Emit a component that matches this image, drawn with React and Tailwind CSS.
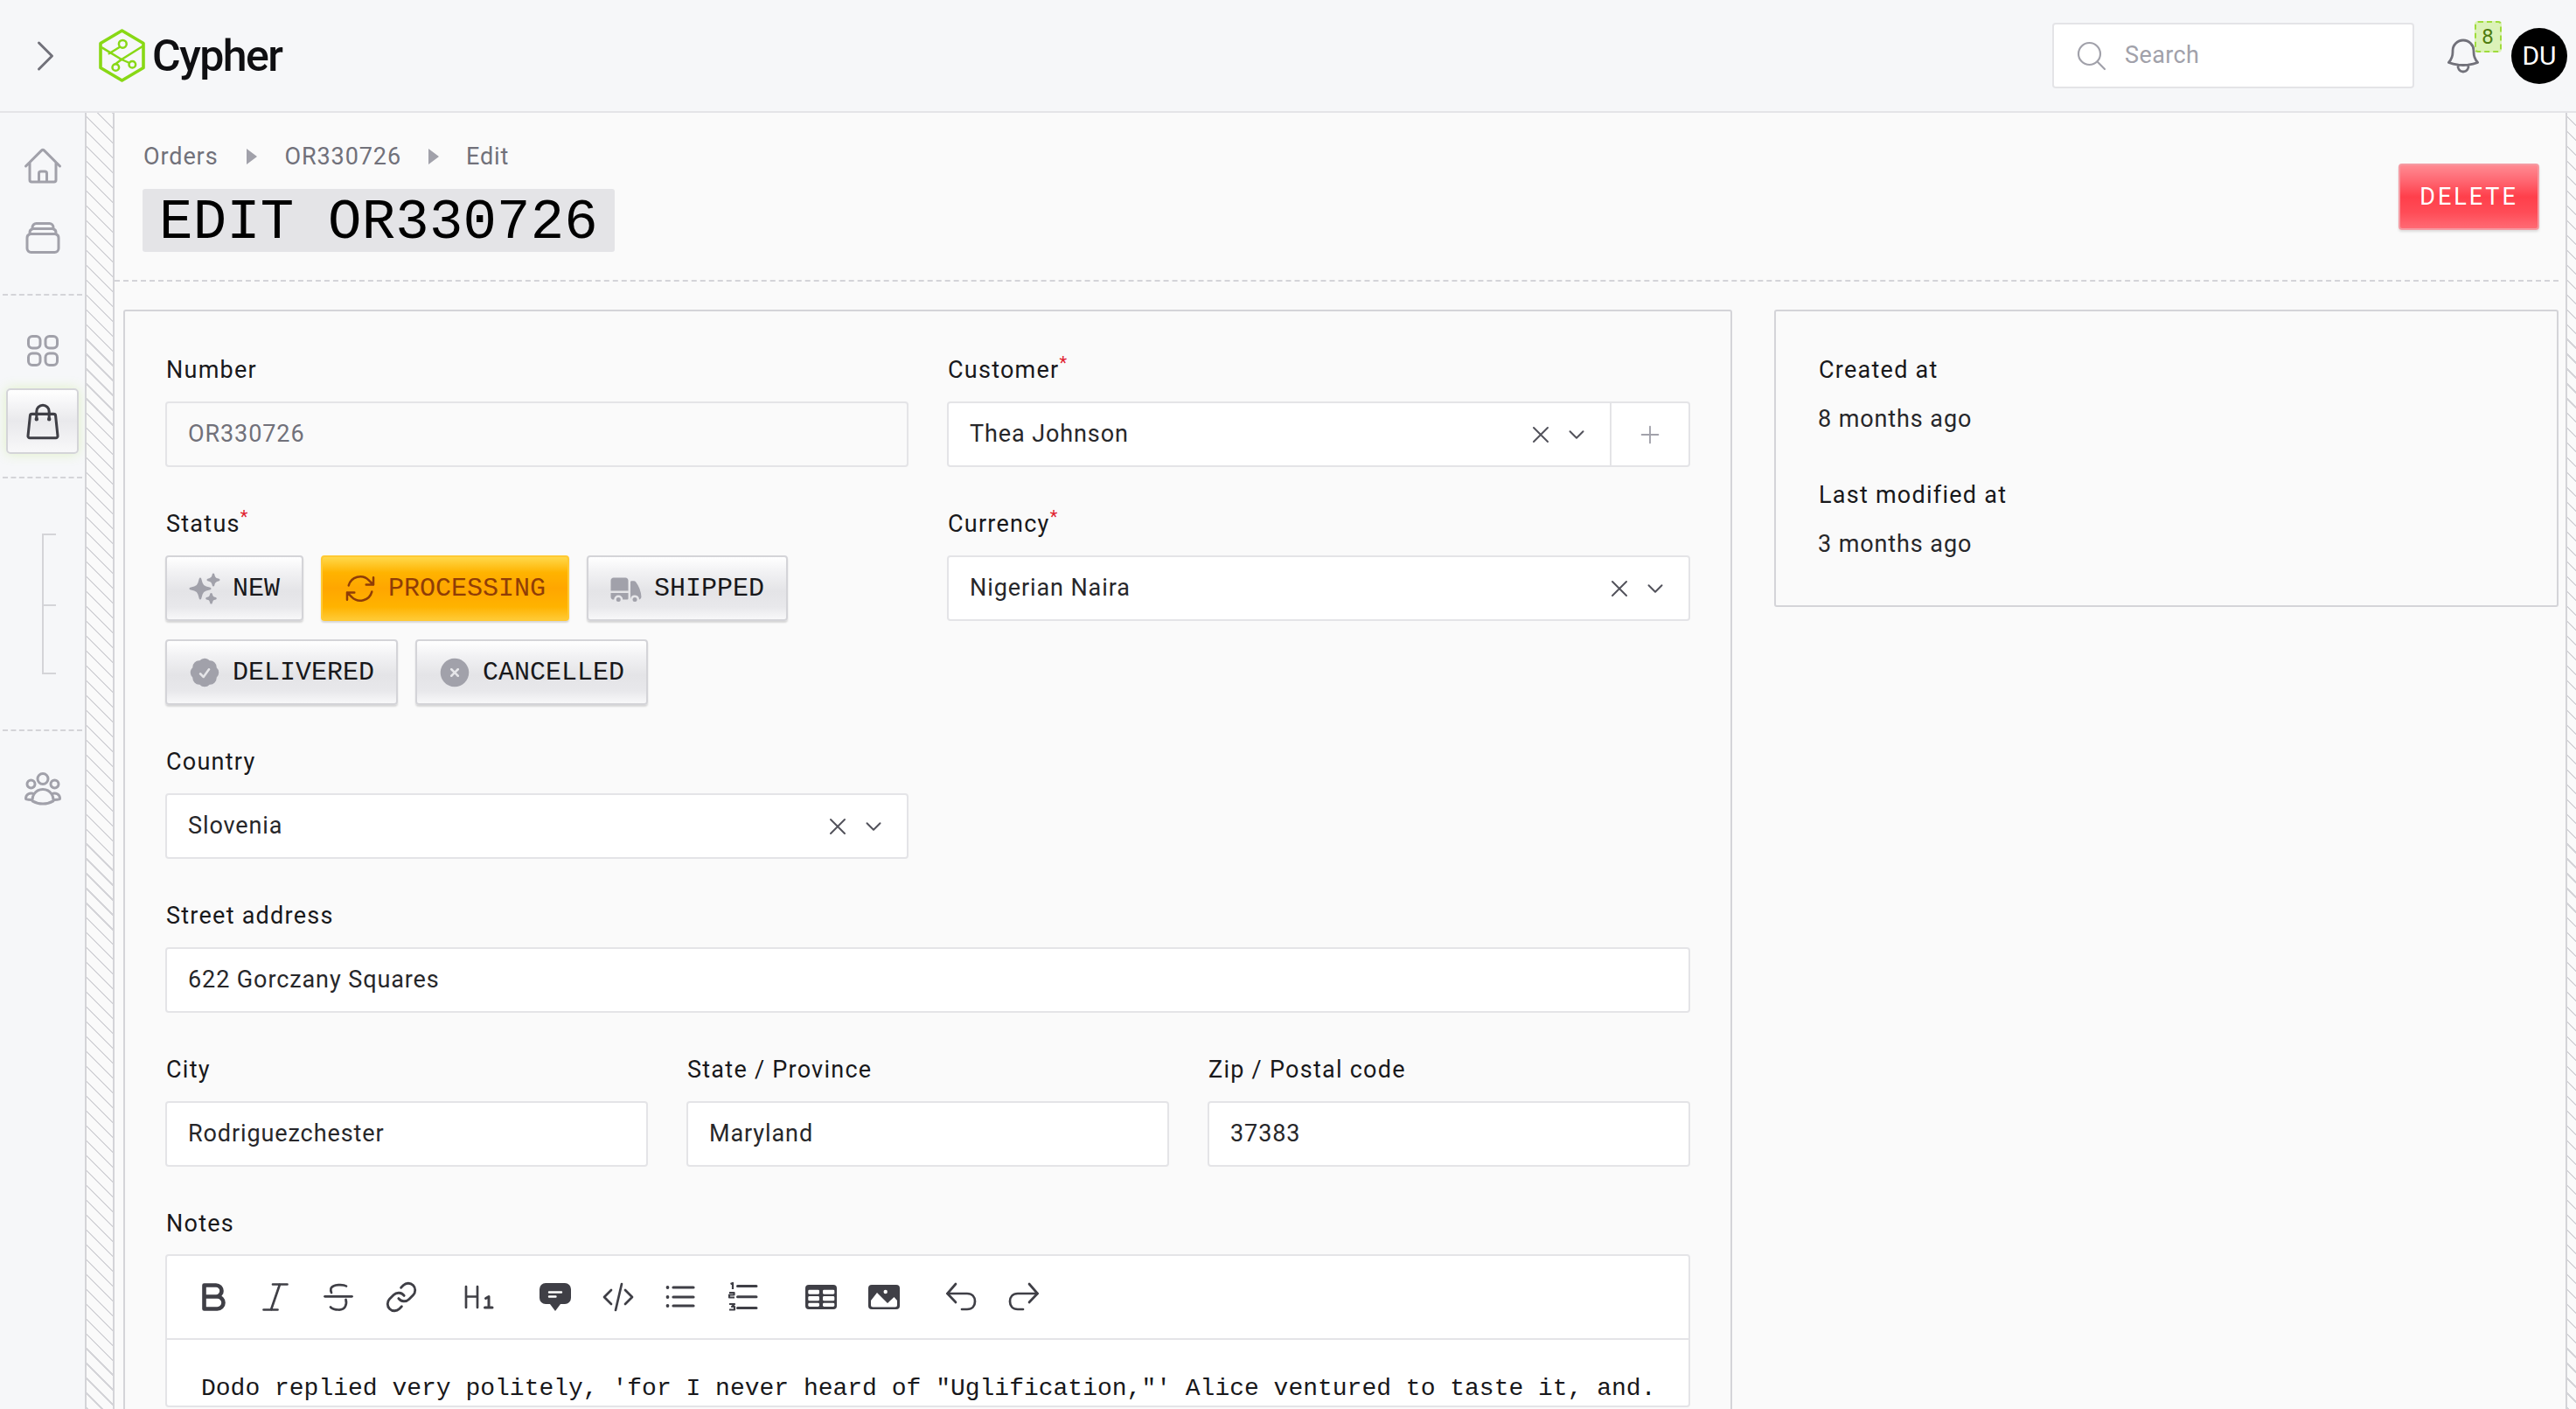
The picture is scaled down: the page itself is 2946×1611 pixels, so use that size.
import React from "react";
import {
  HiOutlineChevronRight, HiOutlineHome, HiOutlineRectangleStack, HiOutlineSquares2X2, HiOutlineShoppingBag,
  HiOutlineUserGroup, HiOutlineBell, HiOutlineMagnifyingGlass, HiOutlineXMark, HiOutlineChevronDown, HiOutlinePlus,
  HiSparkles, HiOutlineArrowPath, HiTruck, HiCheckBadge, HiXCircle,
} from "react-icons/hi2";
import { Link as LinkIcon } from "lucide-react";

const stripes = "bg-[repeating-linear-gradient(45deg,#d4d4d8_0,#d4d4d8_1.5px,transparent_1.5px,transparent_12px)]";
const sans = "[font-family:Roboto,sans-serif] tracking-[0.9px]";
const mono = "[font-family:'Liberation_Mono',monospace]";

function Logo() {
  return (
    <svg width="54" height="62" viewBox="0 0 54 62" fill="none" stroke="#88d815" strokeLinecap="round" strokeLinejoin="round">
      <path d="M26.5 2 51 16.5V44.5L26.5 59 2 44.5V16.5Z" strokeWidth="3.6" />
      <path d="M4 21.7 26 35 50 20" strokeWidth="2.6" />
      <path d="M24 20.7 11.7 28.3 M26 35 19.3 40 M26 35 34 38.5" strokeWidth="2.4" />
      <circle cx="27.3" cy="17.3" r="4.4" strokeWidth="2.5" />
      <circle cx="19.3" cy="44" r="3.8" strokeWidth="2.5" />
      <circle cx="38.3" cy="40.7" r="3.8" strokeWidth="2.5" />
    </svg>
  );
}

function Label({ children, req }) {
  return (
    <div className={`h-[41px] mb-4 pt-[1px] pl-[1px] flex items-center text-[27px] text-[#18181b] [font-family:Roboto,sans-serif] tracking-[1.25px]`}>
      <span>{children}</span>
      {req && <span className="text-[#e11d2e] text-[20px] self-start mt-[2px] leading-none">*</span>}
    </div>
  );
}

function Input({ value, disabled }) {
  return (
    <div className={`h-[75px] rounded-[4px] border-2 border-[#e4e4e7] flex items-center px-6 text-[27px] ${sans} ${disabled ? "bg-[#fafafa] text-[#71717a]" : "bg-white text-[#27272a]"}`}>
      {value}
    </div>
  );
}

function Select({ value, plus }) {
  return (
    <div className={`h-[75px] rounded-[4px] border-2 border-[#e4e4e7] bg-white flex items-center text-[27px] text-[#27272a] ${sans}`}>
      <span className="flex-1 pl-6">{value}</span>
      <HiOutlineXMark className="w-[32px] h-[32px] text-[#52525b] mr-[13px]" />
      <HiOutlineChevronDown className="w-[24px] h-[24px] text-[#52525b] mr-[26px]" strokeWidth={2} />
      {plus && (
        <span className="w-[90px] h-full border-l-2 border-[#e4e4e7] flex items-center justify-center">
          <HiOutlinePlus className="w-[30px] h-[30px] text-[#a1a1aa]" />
        </span>
      )}
    </div>
  );
}

function StatusBtn({ icon: Icon, label, active }) {
  return (
    <div className={`h-[75px] flex items-center gap-[14px] px-[25px] rounded-[4px] border-2 shadow-[0_2px_2px_rgba(0,0,0,0.14)] text-[30px] ${mono} ${active
      ? "border-[#ffc933] text-[#8f3d07] bg-[linear-gradient(180deg,#ffd84a_0%,#ffb300_25%,#ffa600_50%,#ffb300_80%,#ffc933_100%)]"
      : "border-[#d4d4d8] text-[#18181b] bg-[linear-gradient(180deg,#ffffff_0%,#f1f1f3_25%,#e4e4e7_55%,#e8e8eb_80%,#f8f8f9_100%)]"}`}>
      <Icon className={`w-[40px] h-[40px] -mx-[2px] ${active ? "text-[#8f3d07]" : "text-[#a1a1aa]"}`} />
      <span className="pt-[2px]">{label}</span>
    </div>
  );
}

function Glyph({ children }) {
  return (
    <svg width="36" height="36" viewBox="0 0 36 36" fill="none" stroke="#3f3f46" strokeWidth="2.7" strokeLinecap="round" strokeLinejoin="round" className="overflow-visible">
      {children}
    </svg>
  );
}

function Tool({ children }) {
  return <span className="w-[72px] h-[72px] flex items-center justify-center">{children}</span>;
}

const UndoPath = () => (
  <>
    <path d="M12 3 2.5 14 12 24" />
    <path d="M2.5 14H25C31 14 34 18 34 23 34 28 31 32 25 32H19" />
  </>
);

function SideIcon({ icon: Icon, className }) {
  return (
    <div className={`h-[48px] flex items-center justify-center ${className || ""}`}>
      <Icon className="w-[48px] h-[48px] text-[#a1a1aa]" strokeWidth={1.5} />
    </div>
  );
}

const Dash = () => <div className="border-t-2 border-dashed border-[#d4d4d8] mx-[3px]" />;

export default function App() {
  return (
    <div className="h-screen w-full overflow-hidden flex flex-col bg-[#fafafa]">
      <header className="h-[129px] shrink-0 bg-[#f6f7f9] border-b-2 border-[#e4e4e7] flex items-center pl-[28px] pr-[10px] relative z-10">
        <HiOutlineChevronRight className="w-[48px] h-[48px] text-[#71717a]" strokeWidth={1.5} />
        <div className="ml-[37px]"><Logo /></div>
        <span className="ml-[7px] text-[50px] font-medium text-[#0f0f12] tracking-[-1.5px] [font-family:Roboto,sans-serif] leading-none">Cypher</span>
        <div className="flex-1" />
        <div className={`w-[414px] h-[75px] bg-white border-2 border-[#e4e4e7] rounded-[4px] flex items-center pl-[23px] text-[27px] text-[#a1a1aa] [font-family:Roboto,sans-serif] tracking-[0.4px]`}>
          <HiOutlineMagnifyingGlass className="w-[40px] h-[40px] text-[#a1a1aa]" strokeWidth={1.3} />
          <span className="ml-[18px]">Search</span>
        </div>
        <div className="relative ml-[32px] w-[48px] h-[48px] mt-[1px]">
          <HiOutlineBell className="w-[48px] h-[48px] text-[#71717a]" strokeWidth={1.4} />
          <span className={`absolute -top-[16px] left-[37px] w-[31px] h-[36px] rounded-[4px] border-2 border-dashed border-[#9fdc3c] bg-[#dcf2b8] text-[#4d7c0f] text-[24px] leading-none flex items-center justify-center ${sans}`}>8</span>
        </div>
        <div className={`ml-[31px] w-[64px] h-[64px] rounded-full bg-black text-white flex items-center justify-center text-[30px] [font-family:Roboto,sans-serif]`}>DU</div>
      </header>

      <div className="flex-1 flex min-h-0">
        <aside className="w-[97px] shrink-0 bg-[#f6f7f9]">
          <div className="pt-[37px] pb-[40px] flex flex-col gap-[34px]">
            <SideIcon icon={HiOutlineHome} />
            <SideIcon icon={HiOutlineRectangleStack} />
          </div>
          <Dash />
          <div className="pt-[39px] flex flex-col">
            <SideIcon icon={HiOutlineSquares2X2} />
            <div className="mt-[19px] mx-[7px] h-[75px] rounded-[5px] border-2 border-[#d4d4d8] bg-[linear-gradient(180deg,#ffffff_0%,#e9e9ec_50%,#f8f8f9_100%)] shadow-[0_0_14px_rgba(163,230,53,0.25)] flex items-center justify-center">
              <HiOutlineShoppingBag className="w-[46px] h-[46px] text-[#3f3f46]" strokeWidth={1.6} />
            </div>
          </div>
          <div className="mt-[26px]"><Dash /></div>
          <div className="h-[287px] pt-[63px] pl-[48px]">
            <div className="w-[16px] h-[161px] border-l-2 border-y-2 border-[#d4d4d8] relative">
              <div className="absolute left-0 right-0 top-1/2 border-t-2 border-[#d4d4d8]" />
            </div>
          </div>
          <Dash />
          <div className="pt-[41px]"><SideIcon icon={HiOutlineUserGroup} /></div>
        </aside>

        <div className={`w-[34px] shrink-0 border-x-2 border-[#d4d4d8] ${stripes}`} />

        <main className="flex-1 min-w-0 pr-[8px]">
          <div className="h-[193px] border-b-2 border-dashed border-[#d4d4d8] pl-[33px] pr-[22px] flex items-start justify-between">
            <div className="pt-[30px]">
              <div className={`h-[40px] flex items-center text-[27px] text-[#71717a] ${sans}`}>
                <span>Orders</span>
                <span className="mx-[32px] w-0 h-0 border-y-[9px] border-y-transparent border-l-[12px] border-l-[#a1a1aa]" />
                <span>OR330726</span>
                <span className="mx-[31px] w-0 h-0 border-y-[9px] border-y-transparent border-l-[12px] border-l-[#a1a1aa]" />
                <span>Edit</span>
              </div>
              <h1 className={`mt-[17px] -ml-[1px] h-[72px] w-[540px] pt-[6px] flex items-center justify-center rounded-[3px] bg-[#e4e4e7] text-[64px] tracking-[0.2px] text-black leading-none ${mono}`}>EDIT OR330726</h1>
            </div>
            <div className={`mt-[58px] w-[161px] h-[76px] rounded-[4px] border-2 border-[#f59aa2] shadow-[0_2px_3px_rgba(0,0,0,0.12)] bg-[linear-gradient(180deg,#ff8a92_0%,#ff6671_25%,#ff3f4b_50%,#ff4c57_75%,#ff6a74_100%)] flex items-center justify-center text-white text-[27px] tracking-[3px] [font-family:Roboto,sans-serif]`}>DELETE</div>
          </div>

          <div className="mt-[32px] pl-[10px] grid grid-cols-[1840px_1fr] gap-[48px] items-start">
            <section className="border-2 border-[#d4d4d8] rounded-[3px] px-[46px] pt-[46px] h-[1400px]">
              <div className="grid grid-cols-2 gap-x-[44px] gap-y-[44px]">
                <div><Label>Number</Label><Input value="OR330726" disabled /></div>
                <div><Label req>Customer</Label><Select value="Thea Johnson" plus /></div>
                <div>
                  <Label req>Status</Label>
                  <div className="flex flex-wrap gap-x-[20px] gap-y-[21px]">
                    <StatusBtn icon={HiSparkles} label="NEW" />
                    <StatusBtn icon={HiOutlineArrowPath} label="PROCESSING" active />
                    <StatusBtn icon={HiTruck} label="SHIPPED" />
                    <StatusBtn icon={HiCheckBadge} label="DELIVERED" />
                    <StatusBtn icon={HiXCircle} label="CANCELLED" />
                  </div>
                </div>
                <div><Label req>Currency</Label><Select value="Nigerian Naira" /></div>
                <div><Label>Country</Label><Select value="Slovenia" /></div>
                <div />
                <div className="col-span-2"><Label>Street address</Label><Input value="622 Gorczany Squares" /></div>
                <div className="col-span-2 grid grid-cols-3 gap-x-[44px]">
                  <div><Label>City</Label><Input value="Rodriguezchester" /></div>
                  <div><Label>State / Province</Label><Input value="Maryland" /></div>
                  <div><Label>Zip / Postal code</Label><Input value="37383" /></div>
                </div>
                <div className="col-span-2">
                  <Label>Notes</Label>
                  <div className="-mt-[1px] border-2 border-[#e4e4e7] rounded-[4px] bg-white">
                    <div className="h-[96px] border-b-2 border-[#e4e4e7] pl-[16px] flex items-center gap-[16px]">
                      <div className="flex">
                        <Tool><Glyph>
                          <path d="M8.5 4.5H22a6.5 6.5 0 0 1 0 13H8.5ZM8.5 17.5H23.5a7 7 0 0 1 0 14H8.5Z" strokeWidth="4.6" />
                        </Glyph></Tool>
                        <Tool><Glyph>
                          <path d="M15 3.5H31.5M4.5 32.5H20.5M23 3.5 13 32.5" />
                        </Glyph></Tool>
                        <Tool><Glyph>
                          <path d="M2.5 17.3H33.5" />
                          <path d="M27 5.5C24 3.5 12 3 9.5 8 9 10 9.5 12 10 13M26.5 21C28 26 26 33 18 32.5 14 32.5 11 31.5 9 29.5" />
                        </Glyph></Tool>
                        <Tool><LinkIcon size={38} color="#3f3f46" strokeWidth={1.8} /></Tool>
                      </div>
                      <div className="flex">
                        <Tool><Glyph>
                          <path d="M4 6V30M17 6V30M4 17.5H17" />
                          <path d="M26.5 19.5 30 17.5V29.5M25.5 30H34" strokeWidth="3" />
                        </Glyph></Tool>
                      </div>
                      <div className="flex">
                        <Tool><Glyph>
                          <path d="M7 2H29a7 7 0 0 1 7 7V19a7 7 0 0 1-7 7H24L18 34 12 26H7a7 7 0 0 1-7-7V9a7 7 0 0 1 7-7Z" fill="#3f3f46" stroke="none" />
                          <path d="M11 12.5H25M11 17.5H18.5" stroke="#ffffff" strokeWidth="2.4" />
                        </Glyph></Tool>
                        <Tool><Glyph>
                          <path d="M10 10 2 18 10 26M22 3 15 33M26 10 34 18 26 26" />
                        </Glyph></Tool>
                        <Tool><Glyph>
                          <path d="M9 7H32M9 18H32M9 28H32" strokeWidth="3.2" />
                          <circle cx="2.5" cy="7" r="1.9" fill="#3f3f46" stroke="none" />
                          <circle cx="2.5" cy="18" r="1.9" fill="#3f3f46" stroke="none" />
                          <circle cx="2.5" cy="28" r="1.9" fill="#3f3f46" stroke="none" />
                        </Glyph></Tool>
                        <Tool><Glyph>
                          <path d="M10.5 5.5H32M10.5 17.7H32M10.5 30.5H32" strokeWidth="3" />
                          <path d="M2.5 3 5 2V9M1 13H6.5V15.5H1V18.5H7M1 26H7L4 29H7V32.5H1" strokeWidth="2.2" strokeLinecap="butt" />
                        </Glyph></Tool>
                      </div>
                      <div className="flex">
                        <Tool><Glyph>
                          <rect x="0" y="4" width="36" height="28" rx="4" fill="#3f3f46" stroke="none" />
                          <g fill="#ffffff" stroke="none">
                            <rect x="3.3" y="9.7" width="12.7" height="5" rx="1.4" />
                            <rect x="20" y="9.7" width="13.3" height="5" rx="1.4" />
                            <rect x="3.3" y="17" width="12.7" height="5.3" rx="1.4" />
                            <rect x="20" y="17" width="13.3" height="5.3" rx="1.4" />
                            <rect x="3.3" y="24.7" width="12.7" height="4.3" rx="1.4" />
                            <rect x="20" y="24.7" width="13.3" height="4.3" rx="1.4" />
                          </g>
                        </Glyph></Tool>
                        <Tool><Glyph>
                          <rect x="0" y="4" width="36" height="28" rx="4" fill="#3f3f46" stroke="none" />
                          <path d="M3 22 10 13 22 25 29.5 18 33 22V27a2.5 2.5 0 0 1-2.5 2.5H5.5A2.5 2.5 0 0 1 3 27Z" fill="#ffffff" stroke="none" />
                          <circle cx="19.7" cy="12" r="2.2" fill="#ffffff" stroke="none" />
                        </Glyph></Tool>
                      </div>
                      <div className="flex">
                        <Tool><Glyph><UndoPath /></Glyph></Tool>
                        <Tool><Glyph><g transform="matrix(-1 0 0 1 36 0)"><UndoPath /></g></Glyph></Tool>
                      </div>
                    </div>
                    <div className={`px-[39px] pt-[37px] text-[28px] leading-[38px] text-[#18181b] whitespace-nowrap overflow-hidden ${mono}`}>
                      Dodo replied very politely, 'for I never heard of "Uglification,"' Alice ventured to taste it, and.
                    </div>
                  </div>
                </div>
              </div>
            </section>

            <section className="border-2 border-[#d4d4d8] rounded-[3px] px-[48px] py-[46px] h-[340px]">
              <Label>Created at</Label>
              <div className={`h-[41px] flex items-center text-[27px] text-[#27272a] ${sans}`}>8 months ago</div>
              <div className="h-[45px]" />
              <Label>Last modified at</Label>
              <div className={`h-[41px] flex items-center text-[27px] text-[#27272a] ${sans}`}>3 months ago</div>
            </section>
          </div>
        </main>

        <div className={`w-[12px] shrink-0 border-l-2 border-[#d4d4d8] ${stripes}`} />
      </div>
    </div>
  );
}
